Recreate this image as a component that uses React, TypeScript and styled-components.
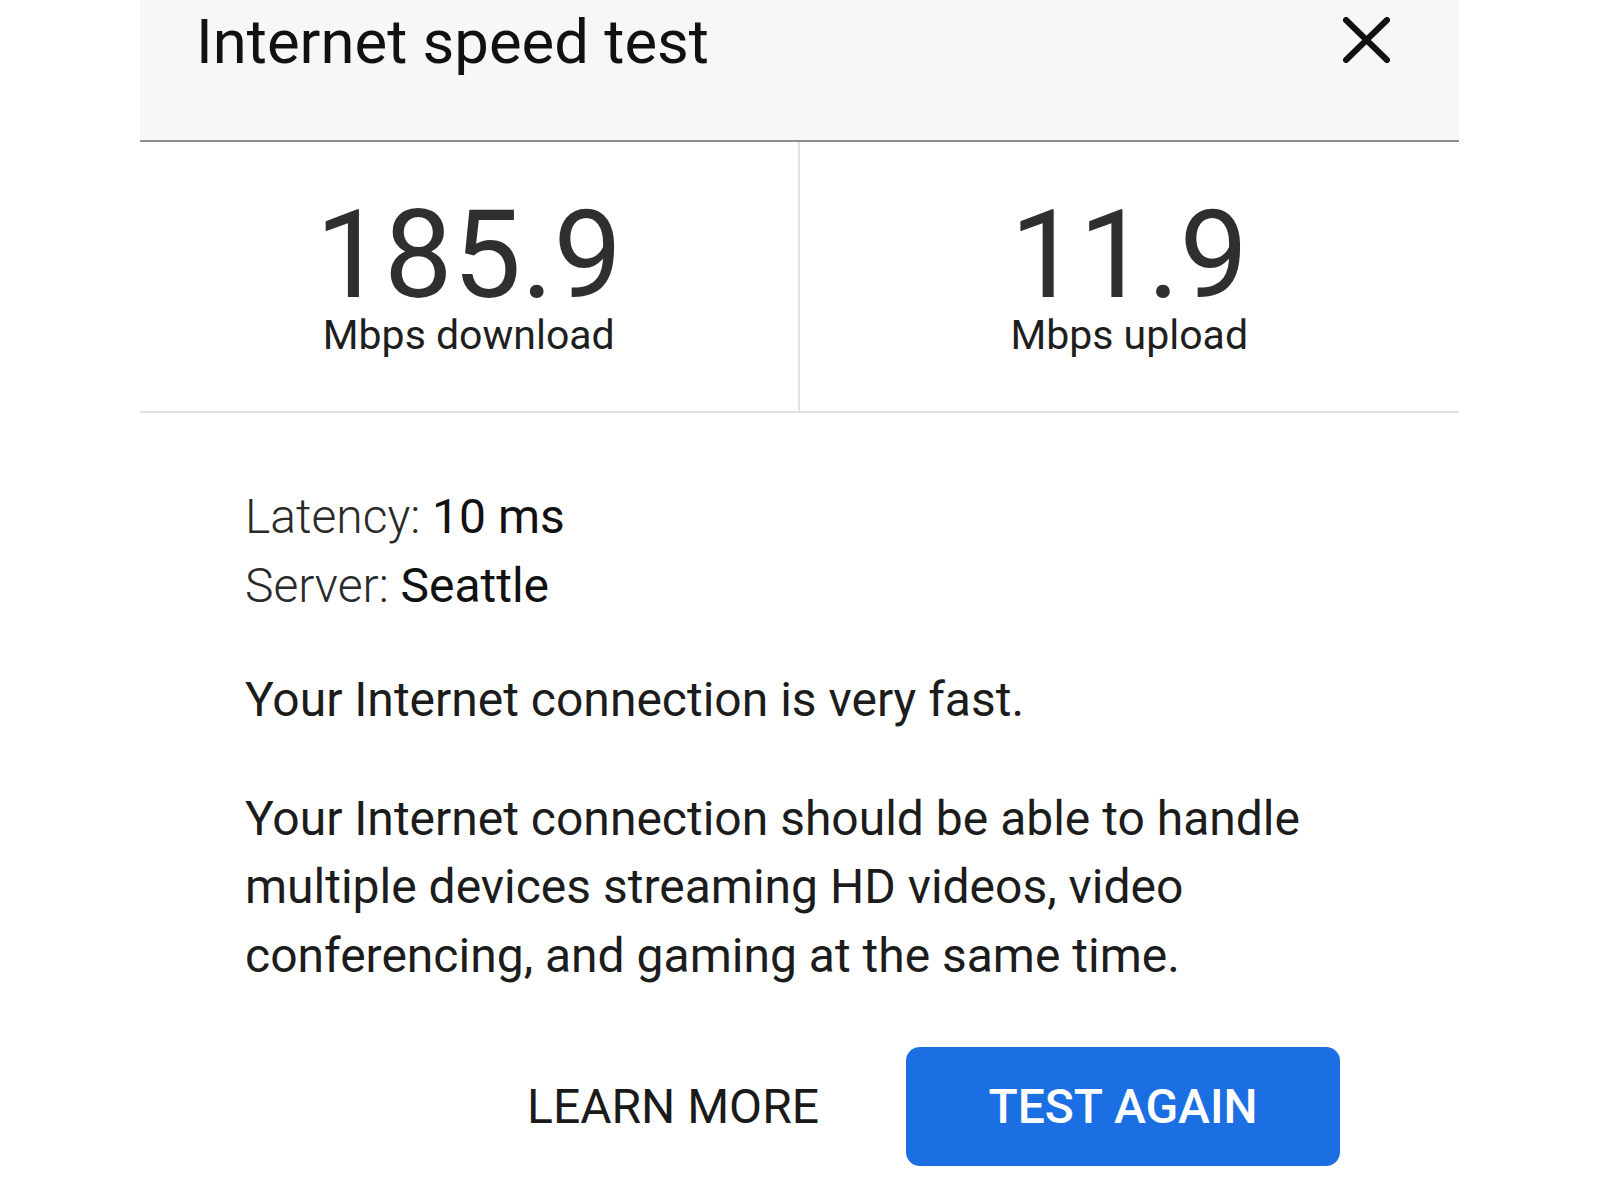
import React from 'react';
import styled, { createGlobalStyle } from 'styled-components';

const FONT = `Roboto, 'Liberation Sans', Arial, sans-serif`;

const GlobalStyle = createGlobalStyle`
  body {
    margin: 0;
    background: #ffffff;
    font-family: ${FONT};
    color: #202124;
  }
`;

const Panel = styled.div`
  width: 1319px;
  margin-left: 140px;
`;

const Header = styled.header`
  height: 142px;
  box-sizing: border-box;
  background: #f6f7f8;
  border-bottom: 2px solid #8e8e8e;
  display: flex;
  justify-content: space-between;
  align-items: flex-start;
  padding: 11px 69px 0 56px;
`;

const Title = styled.h1`
  margin: 0;
  font-size: 61.6px;
  line-height: 62px;
  font-weight: 400;
  color: #111;
`;

const CloseButton = styled.button`
  border: 0;
  background: none;
  padding: 0;
  margin-top: 6px;
  width: 47px;
  height: 46px;
  cursor: pointer;
`;

const Stats = styled.section`
  display: grid;
  grid-template-columns: 1fr 1fr;
  height: 269px;
  border-bottom: 2px solid #e0e0e0;
`;

const Stat = styled.div<{ $divider?: boolean }>`
  display: flex;
  flex-direction: column;
  align-items: center;
  padding-top: 54px;
  border-right: ${(p) => (p.$divider ? '2px solid #e2e2e2' : 'none')};
`;

const Value = styled.div`
  font-size: 122px;
  line-height: 120px;
  color: #2f2f2f;
`;

const Unit = styled.div`
  font-size: 41px;
  line-height: 38px;
  color: #1e1e1e;
`;

const Body = styled.div`
  padding: 70px 0 0 105px;
  font-size: 48px;
  line-height: 68.5px;
  color: #1c1c1c;
`;

const Detail = styled.div`
  font-weight: 300;
  color: #2a2a2a;

  strong {
    font-weight: 400;
    color: #111;
  }
`;

const Text = styled.p<{ $gap: number }>`
  margin: ${(p) => p.$gap}px 0 0;
  max-width: 1110px;
`;

const Actions = styled.div`
  display: flex;
  justify-content: flex-end;
  align-items: center;
  gap: 87px;
  margin-top: 57px;
  padding-right: 119px;
`;

const LinkButton = styled.button`
  border: 0;
  background: none;
  padding: 0;
  font-family: ${FONT};
  font-size: 48px;
  color: #1a1a1a;
  cursor: pointer;
`;

const PrimaryButton = styled.button`
  width: 434px;
  height: 119px;
  border: 0;
  border-radius: 14px;
  background: #1b6fe3;
  color: #fff;
  font-family: ${FONT};
  font-size: 48px;
  font-weight: 500;
  cursor: pointer;
`;

const App = () => (
  <>
    <GlobalStyle />
    <Panel>
      <Header>
        <Title>Internet speed test</Title>
        <CloseButton aria-label="Close">
          <svg width="47" height="46" viewBox="0 0 47 46">
            <path d="M3 3 L44 43 M44 3 L3 43" stroke="#111" strokeWidth="6" strokeLinecap="round" />
          </svg>
        </CloseButton>
      </Header>
      <Stats>
        <Stat $divider>
          <Value>185.9</Value>
          <Unit>Mbps download</Unit>
        </Stat>
        <Stat>
          <Value>11.9</Value>
          <Unit>Mbps upload</Unit>
        </Stat>
      </Stats>
      <Body>
        <Detail>Latency: <strong>10 ms</strong></Detail>
        <Detail>Server: <strong>Seattle</strong></Detail>
        <Text $gap={46}>Your Internet connection is very fast.</Text>
        <Text $gap={50}>
          Your Internet connection should be able to handle multiple devices streaming HD videos, video
          conferencing, and gaming at the same time.
        </Text>
      </Body>
      <Actions>
        <LinkButton>LEARN MORE</LinkButton>
        <PrimaryButton>TEST AGAIN</PrimaryButton>
      </Actions>
    </Panel>
  </>
);

export default App;
